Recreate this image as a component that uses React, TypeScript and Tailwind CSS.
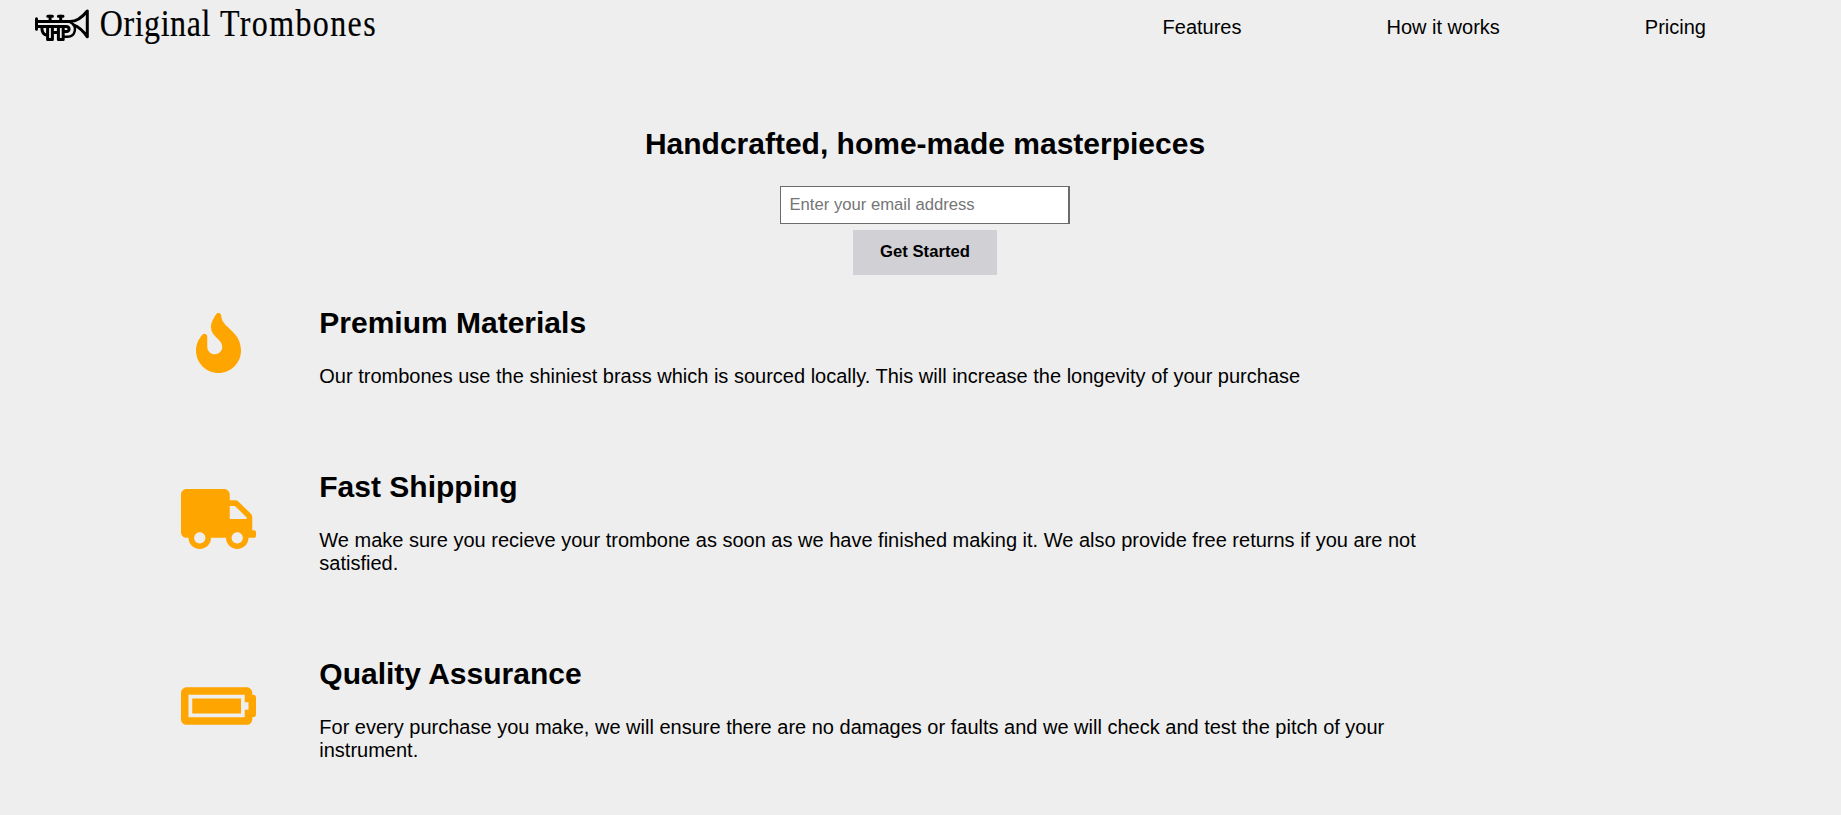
import { FaFire, FaTruck, FaBatteryFull } from "react-icons/fa";
import type { IconType } from "react-icons";

const links = [
  { label: "Features", href: "#features" },
  { label: "How it works", href: "#how-it-works" },
  { label: "Pricing", href: "#pricing" },
];

const features: { icon: IconType; title: string; text: string }[] = [
  {
    icon: FaFire,
    title: "Premium Materials",
    text: "Our trombones use the shiniest brass which is sourced locally. This will increase the longevity of your purchase",
  },
  {
    icon: FaTruck,
    title: "Fast Shipping",
    text: "We make sure you recieve your trombone as soon as we have finished making it. We also provide free returns if you are not satisfied.",
  },
  {
    icon: FaBatteryFull,
    title: "Quality Assurance",
    text: "For every purchase you make, we will ensure there are no damages or faults and we will check and test the pitch of your instrument.",
  },
];

function Logo() {
  return (
    <div className="flex">
      <svg
        width="64"
        height="50"
        viewBox="30 0 64 50"
        fill="none"
        stroke="#000"
        strokeWidth="3"
        strokeLinecap="round"
        strokeLinejoin="round"
      >
        <path d="M36.5 18.8V29.2M36.5 21.6H70C77 21.6 82.5 17 87.3 11V36.8C83.5 31.5 80 27.5 74 25.2" />
        <path d="M47.8 16.2H52.4M50.1 16V21M58.4 16.2H63M60.7 16V21" />
        <path d="M36.5 26.6H66C70 26.6 70 31.6 66.5 31.6H63.8" />
        <path d="M41.8 27C41.8 31.5 43.5 35.2 47.4 35.2M47.6 27V39.6H52.4V27M58.4 27V39.6H63.2V27M53 32.4H58" />
        <path d="M63.4 36.8H67.5C76 36.8 77.5 25.5 70.5 22.4" strokeWidth="2.4" />
      </svg>
      <svg width="290" height="50" viewBox="94 0 290 50" className="overflow-visible">
        <g
          fontSize="37.2"
          stroke="#000"
          strokeWidth="0.2"
          className="font-['Liberation_Serif',serif]"
        >
          <text
            transform="translate(99.8 36) scale(0.86 1)"
            textLength="128.5"
            lengthAdjust="spacing"
          >
            Original
          </text>
          <text
            transform="translate(220 36) scale(0.86 1)"
            textLength="181"
            lengthAdjust="spacing"
          >
            Trombones
          </text>
        </g>
      </svg>
    </div>
  );
}

export default function App() {
  return (
    <div className="min-h-[815px] overflow-hidden bg-[#eeeeee] font-['Liberation_Sans',Arial,sans-serif] text-xl leading-[23px] text-black">
      <header className="flex h-[50px] items-start justify-between pl-[30px] pr-[135px]">
        <Logo />
        <nav className="flex gap-[145px] pt-[15.5px]">
          {links.map((l) => (
            <a key={l.label} href={l.href}>
              {l.label}
            </a>
          ))}
        </nav>
      </header>

      <section className="flex h-[211px] flex-col items-center pl-[9px] pt-[76px]">
        <h2 className="text-3xl/[35px] font-bold">Handcrafted, home-made masterpieces</h2>
        <form className="mt-[25px] flex flex-col items-center">
          <input
            type="email"
            placeholder="Enter your email address"
            className="block h-[38px] w-[290px] border border-r-2 border-[#6b6b6b] bg-white pl-[8.5px] pr-2 text-[16.67px] placeholder:text-[#757575]"
          />
          <button
            type="button"
            className="mt-[6px] h-[45px] w-[144px] bg-[#d1d0d5] pb-[3px] text-[16.67px] font-bold"
          >
            Get Started
          </button>
        </form>
      </section>

      <section id="features" className="pl-[181px]">
        {features.map(({ icon: Icon, title, text }) => (
          <div key={title} className="flex items-center">
            <Icon className="h-[60px] w-[75px] shrink-0 text-[#ffa500]" />
            <div className="ml-[63.3px] w-[1125px] pb-[37px] pt-[43.5px]">
              <h2 className="mb-[25.5px] text-3xl/[35px] font-bold">{title}</h2>
              <p>{text}</p>
            </div>
          </div>
        ))}
      </section>
    </div>
  );
}
